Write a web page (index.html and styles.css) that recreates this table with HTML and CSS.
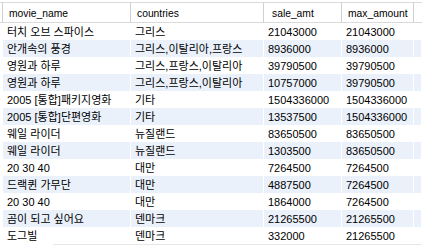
FILE: index.html
```html
<!DOCTYPE html>
<html lang="ko">
<head>
<meta charset="utf-8">
<link rel="stylesheet" href="styles.css">
</head>
<body>
<div class="grid">
  <div class="head">
    <div class="hc">movie_name</div>
    <div class="hc">countries</div>
    <div class="hc">sale_amt</div>
    <div class="hc">max_amount</div>
    <div class="hfill"></div>
  </div>
  <div class="row"><div class="c">터치 오브 스파이스</div><div class="c">그리스</div><div class="c">21043000</div><div class="c">21043000</div><div class="fill"></div></div>
  <div class="row alt"><div class="c">안개속의 풍경</div><div class="c">그리스,이탈리아,프랑스</div><div class="c">8936000</div><div class="c">8936000</div><div class="fill"></div></div>
  <div class="row"><div class="c">영원과 하루</div><div class="c">그리스,프랑스,이탈리아</div><div class="c">39790500</div><div class="c">39790500</div><div class="fill"></div></div>
  <div class="row alt"><div class="c">영원과 하루</div><div class="c">그리스,프랑스,이탈리아</div><div class="c">10757000</div><div class="c">39790500</div><div class="fill"></div></div>
  <div class="row"><div class="c">2005 [통합]패키지영화</div><div class="c">기타</div><div class="c">1504336000</div><div class="c">1504336000</div><div class="fill"></div></div>
  <div class="row alt"><div class="c">2005 [통합]단편영화</div><div class="c">기타</div><div class="c">13537500</div><div class="c">1504336000</div><div class="fill"></div></div>
  <div class="row"><div class="c">웨일 라이더</div><div class="c">뉴질랜드</div><div class="c">83650500</div><div class="c">83650500</div><div class="fill"></div></div>
  <div class="row alt"><div class="c">웨일 라이더</div><div class="c">뉴질랜드</div><div class="c">1303500</div><div class="c">83650500</div><div class="fill"></div></div>
  <div class="row"><div class="c">20 30 40</div><div class="c">대만</div><div class="c">7264500</div><div class="c">7264500</div><div class="fill"></div></div>
  <div class="row alt"><div class="c">드랙퀸 가무단</div><div class="c">대만</div><div class="c">4887500</div><div class="c">7264500</div><div class="fill"></div></div>
  <div class="row"><div class="c">20 30 40</div><div class="c">대만</div><div class="c">1864000</div><div class="c">7264500</div><div class="fill"></div></div>
  <div class="row alt"><div class="c">곰이 되고 싶어요</div><div class="c">덴마크</div><div class="c">21265500</div><div class="c">21265500</div><div class="fill"></div></div>
  <div class="row"><div class="c">도그빌</div><div class="c">덴마크</div><div class="c">332000</div><div class="c">21265500</div><div class="fill"></div></div>
  <div class="scroll"></div>
</div>
</body>
</html>
```
FILE: styles.css
```css
html, body {
  margin: 0;
  padding: 0;
  background: #ffffff;
}
body {
  font-family: "Liberation Sans", "Noto Sans CJK KR", sans-serif;
  font-size: 11px;
  color: #000000;
  width: 422px;
  height: 245px;
  overflow: hidden;
}
.grid {
  padding-top: 2px;
  display: flex;
  flex-direction: column;
}
.head {
  display: grid;
  grid-template-columns: 3px 128px 133px 78px 72px 1fr;
  height: 21px;
  box-sizing: border-box;
  border-top: 1px solid #dadada;
  border-bottom: 1px solid #dadada;
}
.head::before {
  content: "";
  border-right: 1px solid #d0d0d0;
  width: 2px;
}
.hc {
  border-right: 1px solid #d0d0d0;
  padding: 4px 0 0 6px;
  font-size: 10.3px;
  line-height: 14px;
  white-space: nowrap;
  overflow: hidden;
}
.hc:nth-child(3) {
  padding-left: 8px;
}
.row {
  display: grid;
  grid-template-columns: 128px 133px 78px 72px 1fr;
  margin-left: 3px;
  height: 17px;
  margin-right: 1px;
}
.c {
  border-right: 1px solid #ffffff;
  padding: 1px 0 0 4px;
  line-height: 16px;
  white-space: nowrap;
  overflow: hidden;
}
.alt .c, .alt .fill {
  background: #eaf1fb;
}
.scroll {
  margin-left: 53px;
  height: 4px;
  background: #e6e6e6;
}
```
